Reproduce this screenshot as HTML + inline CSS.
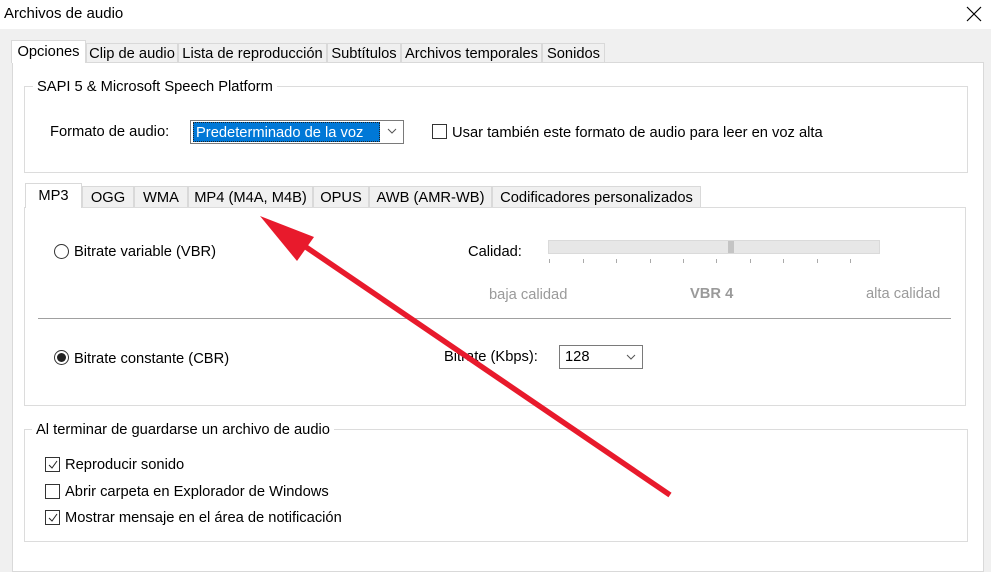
<!DOCTYPE html><html><head><meta charset="utf-8"><style>
*{margin:0;padding:0;box-sizing:border-box}
body{width:991px;height:561px;overflow:hidden;background:#f0f0f0;font-family:"Liberation Sans",sans-serif;font-size:14.7px;color:#000;position:relative}
.a{position:absolute;white-space:nowrap}
.t{margin-top:1px}
.tab{position:absolute;background:#f0f0f0;border:1px solid #d9d9d9;border-bottom:none;text-align:center;line-height:20px}
.sel{background:#fff;z-index:2}
.grp{position:absolute;border:1px solid #dcdcdc}
.cb{position:absolute;width:15px;height:15px;border:1px solid #333;background:#fff}
</style></head><body>
<div class="a" style="left:0;top:0;width:991px;height:29px;background:#fff"></div>
<div class="a" style="left:4px;top:5px;font-size:15px">Archivos de audio</div>
<svg class="a" style="left:966px;top:6px" width="16" height="16"><path d="M1 1L15 15M15 1L1 15" stroke="#000" stroke-width="1.2"/></svg>
<div class="a" style="left:12px;top:62px;width:972px;height:510px;background:#fff;border:1px solid #d9d9d9"></div>
<div class="tab sel" style="left:11px;top:40px;width:75px;height:23px;line-height:23px">Opciones</div>
<div class="tab" style="left:86px;top:43px;width:92px;height:19px">Clip de audio</div>
<div class="tab" style="left:178px;top:43px;width:149px;height:19px">Lista de reproducción</div>
<div class="tab" style="left:327px;top:43px;width:74px;height:19px">Subtítulos</div>
<div class="tab" style="left:401px;top:43px;width:141px;height:19px">Archivos temporales</div>
<div class="tab" style="left:542px;top:43px;width:63px;height:19px">Sonidos</div>
<div class="grp" style="left:24px;top:86px;width:944px;height:87px"></div>
<div class="a" style="left:33px;top:79px;background:#fff;padding:0 4px">SAPI 5 &amp; Microsoft Speech Platform</div>
<div class="a" style="left:50px;top:124px">Formato de audio:</div>
<div class="a" style="left:190px;top:120px;width:214px;height:24px;border:1px solid #7a7a7a;background:#fff"></div>
<div class="a" style="left:193px;top:122px;width:187px;height:20px;background:#0078d7;color:#fff;line-height:20px;padding-left:2px;border:1px dotted #222">Predeterminado de la voz</div>
<svg class="a" style="left:387px;top:127px" width="10" height="8"><path d="M1 2L5 6L9 2" fill="none" stroke="#555"/></svg>
<div class="cb" style="left:432px;top:124px"></div>
<div class="a" style="left:452px;top:125px">Usar también este formato de audio para leer en voz alta</div>
<div class="a" style="left:24px;top:207px;width:942px;height:199px;border:1px solid #dcdcdc;background:#fff"></div>
<div class="tab sel" style="left:25px;top:183px;width:57px;height:25px;line-height:25px">MP3</div>
<div class="tab" style="left:82px;top:186px;width:52px;height:21px;line-height:22px">OGG</div>
<div class="tab" style="left:134px;top:186px;width:54px;height:21px;line-height:22px">WMA</div>
<div class="tab" style="left:188px;top:186px;width:125px;height:21px;line-height:22px">MP4 (M4A, M4B)</div>
<div class="tab" style="left:313px;top:186px;width:56px;height:21px;line-height:22px">OPUS</div>
<div class="tab" style="left:369px;top:186px;width:123px;height:21px;line-height:22px">AWB (AMR-WB)</div>
<div class="tab" style="left:492px;top:186px;width:209px;height:21px;line-height:22px">Codificadores personalizados</div>
<div class="a" style="left:54px;top:244px;width:15px;height:15px;border:1px solid #333;border-radius:50%"></div>
<div class="a" style="left:74px;top:244px">Bitrate variable (VBR)</div>
<div class="a" style="left:468px;top:244px">Calidad:</div>
<div class="a" style="left:548px;top:240px;width:332px;height:14px;background:#e7e7e7;border:1px solid #dadada"></div>
<div class="a" style="left:728px;top:241px;width:6px;height:12px;background:#c4c4c4"></div>
<svg class="a" style="left:548px;top:259px" width="340" height="6"><g stroke="#aaa"><path d="M1.5 0v4M35.5 0v4M68.5 0v4M102.5 0v4M135.5 0v4M168.5 0v4M202.5 0v4M235.5 0v4M269.5 0v4M302.5 0v4"/></g></svg>
<div class="a" style="left:489px;top:287px;color:#9a9a9a">baja calidad</div>
<div class="a" style="left:690px;top:286px;color:#9a9a9a;font-weight:bold">VBR 4</div>
<div class="a" style="left:866px;top:286px;color:#9a9a9a">alta calidad</div>
<div class="a" style="left:38px;top:318px;width:913px;height:1px;background:#a0a0a0"></div>
<div class="a" style="left:54px;top:350px;width:15px;height:15px;border:1px solid #333;border-radius:50%"><div style="position:absolute;left:2px;top:2px;width:9px;height:9px;border-radius:50%;background:#222"></div></div>
<div class="a" style="left:74px;top:351px">Bitrate constante (CBR)</div>
<div class="a" style="left:444px;top:349px">Bitrate (Kbps):</div>
<div class="a" style="left:559px;top:345px;width:84px;height:24px;border:1px solid #7a7a7a;background:#fff;padding-left:5px;line-height:22px">128</div>
<svg class="a" style="left:626px;top:353px" width="10" height="8"><path d="M1 2L5 6L9 2" fill="none" stroke="#555"/></svg>
<div class="grp" style="left:24px;top:429px;width:944px;height:113px"></div>
<div class="a" style="left:32px;top:422px;background:#fff;padding:0 4px">Al terminar de guardarse un archivo de audio</div>
<div class="cb" style="left:45px;top:457px"></div><svg class="a" style="left:47px;top:459px" width="12" height="12"><path d="M2 6L5 9L10 2" fill="none" stroke="#222"/></svg>
<div class="a" style="left:65px;top:457px">Reproducir sonido</div>
<div class="cb" style="left:45px;top:484px"></div>
<div class="a" style="left:65px;top:484px">Abrir carpeta en Explorador de Windows</div>
<div class="cb" style="left:45px;top:510px"></div><svg class="a" style="left:47px;top:512px" width="12" height="12"><path d="M2 6L5 9L10 2" fill="none" stroke="#222"/></svg>
<div class="a" style="left:65px;top:510px">Mostrar mensaje en el área de notificación</div>
<svg class="a" style="left:0;top:0;z-index:5" width="991" height="561"><path d="M670 495L300 243" stroke="#e81a2c" stroke-width="5.5"/><path d="M260 216L314 237L297 261Z" fill="#e81a2c"/></svg>
</body></html>
